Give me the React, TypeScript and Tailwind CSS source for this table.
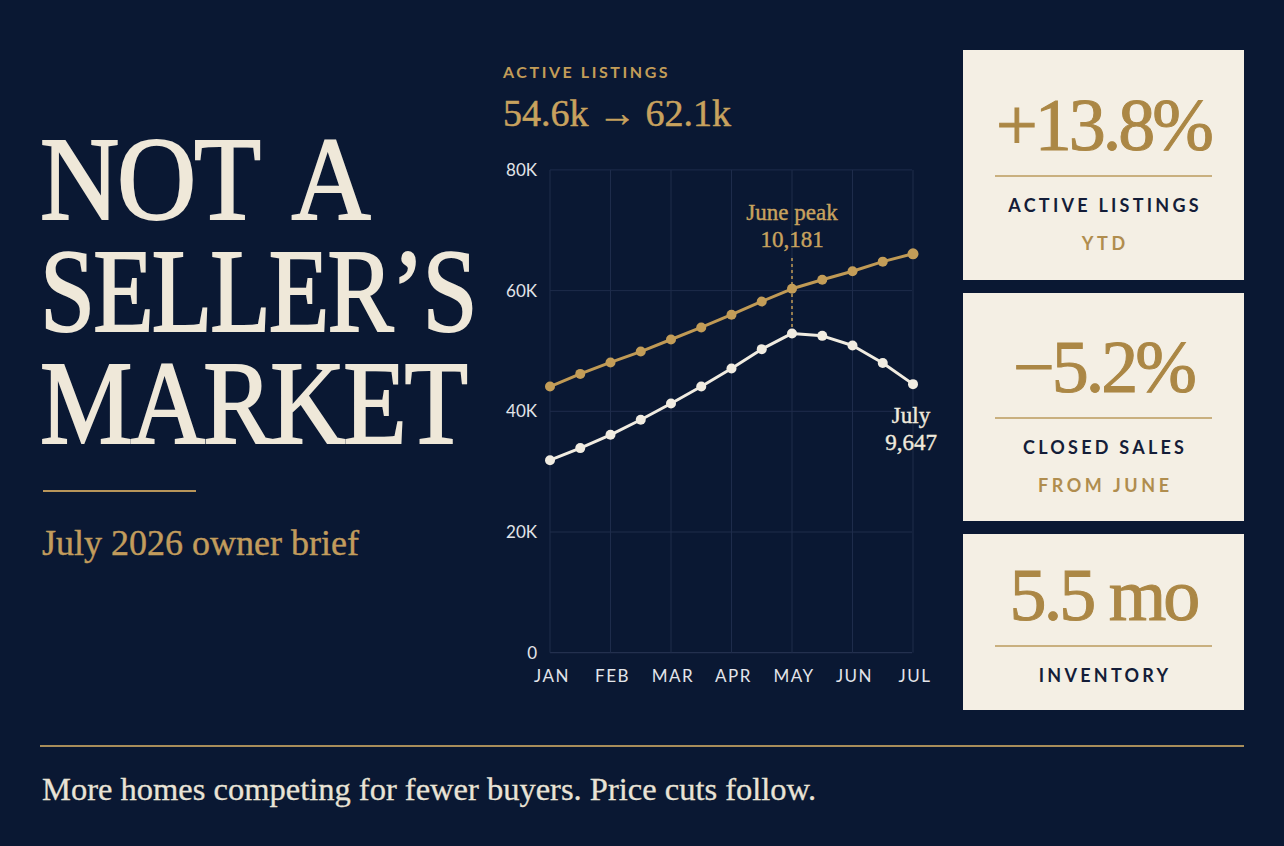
import React from "react";

// listings and closed sales, in thousands, twice a month Jan..Jul
const listings = [44.1, 46.2, 48.1, 49.9, 51.9, 53.9, 56.0, 58.2, 60.3, 61.8, 63.2, 64.8, 66.1];
const sales = [31.9, 33.9, 36.1, 38.6, 41.3, 44.1, 47.1, 50.3, 52.9, 52.5, 50.9, 48.0, 44.5];
const months = ["JAN", "FEB", "MAR", "APR", "MAY", "JUN", "JUL"];
const ticks = [80, 60, 40, 20, 0];

const px = (i: number) => 55 + i * 30.25;
const py = (v: number) => 502.7 - v * 6.035;

const toPath = (data: number[]) =>
  data.map((v, i) => `${i === 0 ? "M" : "L"}${px(i)} ${py(v)}`).join(" ");

const Chart = () => {
  return (
    <svg width="450" height="545" viewBox="0 0 450 545" className="block mt-[15px]">
      {ticks.map((t) => (
        <g key={t}>
          <line x1={55} x2={417} y1={py(t)} y2={py(t)} stroke={t === 0 ? "#2a3756" : "#1e2c4b"} strokeWidth={1} />
          <text x={42} y={py(t) + 6} textAnchor="end" fontSize={17} fill="#e2e4e8" className="font-['Lato',sans-serif]">
            {t === 0 ? "0" : `${t}K`}
          </text>
        </g>
      ))}
      {months.map((m, i) => (
        <g key={m}>
          <line x1={px(i * 2)} x2={px(i * 2)} y1={py(80)} y2={py(0)} stroke="#1e2c4b" strokeWidth={1} />
          <text x={px(i * 2) + 2} y={532} textAnchor="middle" fontSize={17} letterSpacing="1.5" fill="#e3e5ea" className="font-['Lato',sans-serif]">
            {m}
          </text>
        </g>
      ))}

      <line x1={px(8)} x2={px(8)} y1={108} y2={183} stroke="#c09a55" strokeWidth={1.5} strokeDasharray="3 3" />
      <text x={px(8)} y={70} textAnchor="middle" fontSize={23} fill="#c8a25e" stroke="#c8a25e" strokeWidth={0.4} className="font-['Liberation_Serif',serif]">June peak</text>
      <text x={px(8)} y={97} textAnchor="middle" fontSize={23} fill="#c8a25e" stroke="#c8a25e" strokeWidth={0.4} className="font-['Liberation_Serif',serif]">10,181</text>

      <path d={toPath(listings)} fill="none" stroke="#c09a55" strokeWidth={3} strokeLinejoin="round" />
      {listings.map((v, i) => (
        <circle key={i} cx={px(i)} cy={py(v)} r={i === 12 ? 5.5 : 5} fill="#c39d58" />
      ))}

      <path d={toPath(sales)} fill="none" stroke="#f1ece1" strokeWidth={3} strokeLinejoin="round" />
      {sales.map((v, i) => (
        <circle key={i} cx={px(i)} cy={py(v)} r={5} fill="#f1ece1" />
      ))}

      <text x={416} y={273} textAnchor="middle" fontSize={23} fill="#efe9dc" stroke="#efe9dc" strokeWidth={0.4} className="font-['Liberation_Serif',serif]">July</text>
      <text x={416} y={300} textAnchor="middle" fontSize={23} fill="#efe9dc" stroke="#efe9dc" strokeWidth={0.4} className="font-['Liberation_Serif',serif]">9,647</text>
    </svg>
  );
};

type StatProps = {
  value: string;
  label: string;
  sub?: string;
  box: string;
};

const Stat = ({ value, label, sub, box }: StatProps) => (
  <div className={`bg-[#f4efe4] flex flex-col items-center px-8 ${box}`}>
    <div className="font-['Liberation_Serif',serif] text-[74px] leading-none tracking-[-0.04em] text-[#ab8745] [-webkit-text-stroke:1px_#ab8745]">
      {value}
    </div>
    <div className="w-full h-[1.5px] bg-[#c9b07f] mt-[13px]" />
    <div className="mt-[18px] font-['Lato',sans-serif] font-bold text-[18px] leading-[20px] tracking-[0.18em] pl-[0.18em] text-[#141d38]">
      {label}
    </div>
    {sub && (
      <div className="mt-[18px] font-['Lato',sans-serif] font-bold text-[18px] leading-[20px] tracking-[0.2em] pl-[0.2em] text-[#b08d4e]">
        {sub}
      </div>
    )}
  </div>
);

const App = () => {
  return (
    <div className="w-[1284px] h-[846px] overflow-hidden bg-[#0a1833] px-10 pt-[50px]">
      <div className="flex">
        <div className="w-[455px] pt-[74px]">
          <h1 className="font-['Liberation_Serif',serif] text-[118px] leading-[112px] tracking-[-0.02em] text-[#efe8d9] [-webkit-text-stroke:2px_#efe8d9]">
            <div className="origin-left scale-x-[0.93] whitespace-nowrap [word-spacing:0.14em]">NOT A</div>
            <div className="origin-left scale-x-[0.84] whitespace-nowrap">SELLER’S</div>
            <div className="origin-left scale-x-[0.88] whitespace-nowrap">MARKET</div>
          </h1>
          <div className="w-[153px] h-[2px] bg-[#b8955a] mt-[30px] ml-[3px]" />
          <p className="mt-[33px] ml-[2px] font-['Liberation_Serif',serif] text-[36px] leading-none text-[#c29c5c] [-webkit-text-stroke:0.4px_#c29c5c]">
            July 2026 owner brief
          </p>
        </div>

        <div className="w-[450px] pt-[12px]">
          <div className="ml-2 font-['Lato',sans-serif] font-bold text-[16px] leading-[20px] tracking-[0.16em] text-[#c39d58]">
            ACTIVE LISTINGS
          </div>
          <div className="ml-2 mt-[9px] font-['Liberation_Serif',serif] text-[38px] leading-[44px] text-[#c8a25e] [-webkit-text-stroke:0.5px_#c8a25e]">
            54.6k → 62.1k
          </div>
          <Chart />
        </div>

        <div className="w-[281px] ml-[18px] flex flex-col gap-[13px]">
          <Stat value="+13.8%" label="ACTIVE LISTINGS" sub="YTD" box="h-[230px] pt-[38px]" />
          <Stat value="−5.2%" label="CLOSED SALES" sub="FROM JUNE" box="h-[228px] pt-[37px]" />
          <Stat value="5.5 mo" label="INVENTORY" box="h-[176px] pt-[24px]" />
        </div>
      </div>

      <div className="mt-[35px] h-[1.5px] bg-[#a88d5a]" />
      <p className="mt-[22px] ml-[2px] font-['Liberation_Serif',serif] text-[32.5px] leading-[40px] text-[#e9e3d6] [-webkit-text-stroke:0.3px_#e9e3d6]">
        More homes competing for fewer buyers. Price cuts follow.
      </p>
    </div>
  );
};

export default App;
